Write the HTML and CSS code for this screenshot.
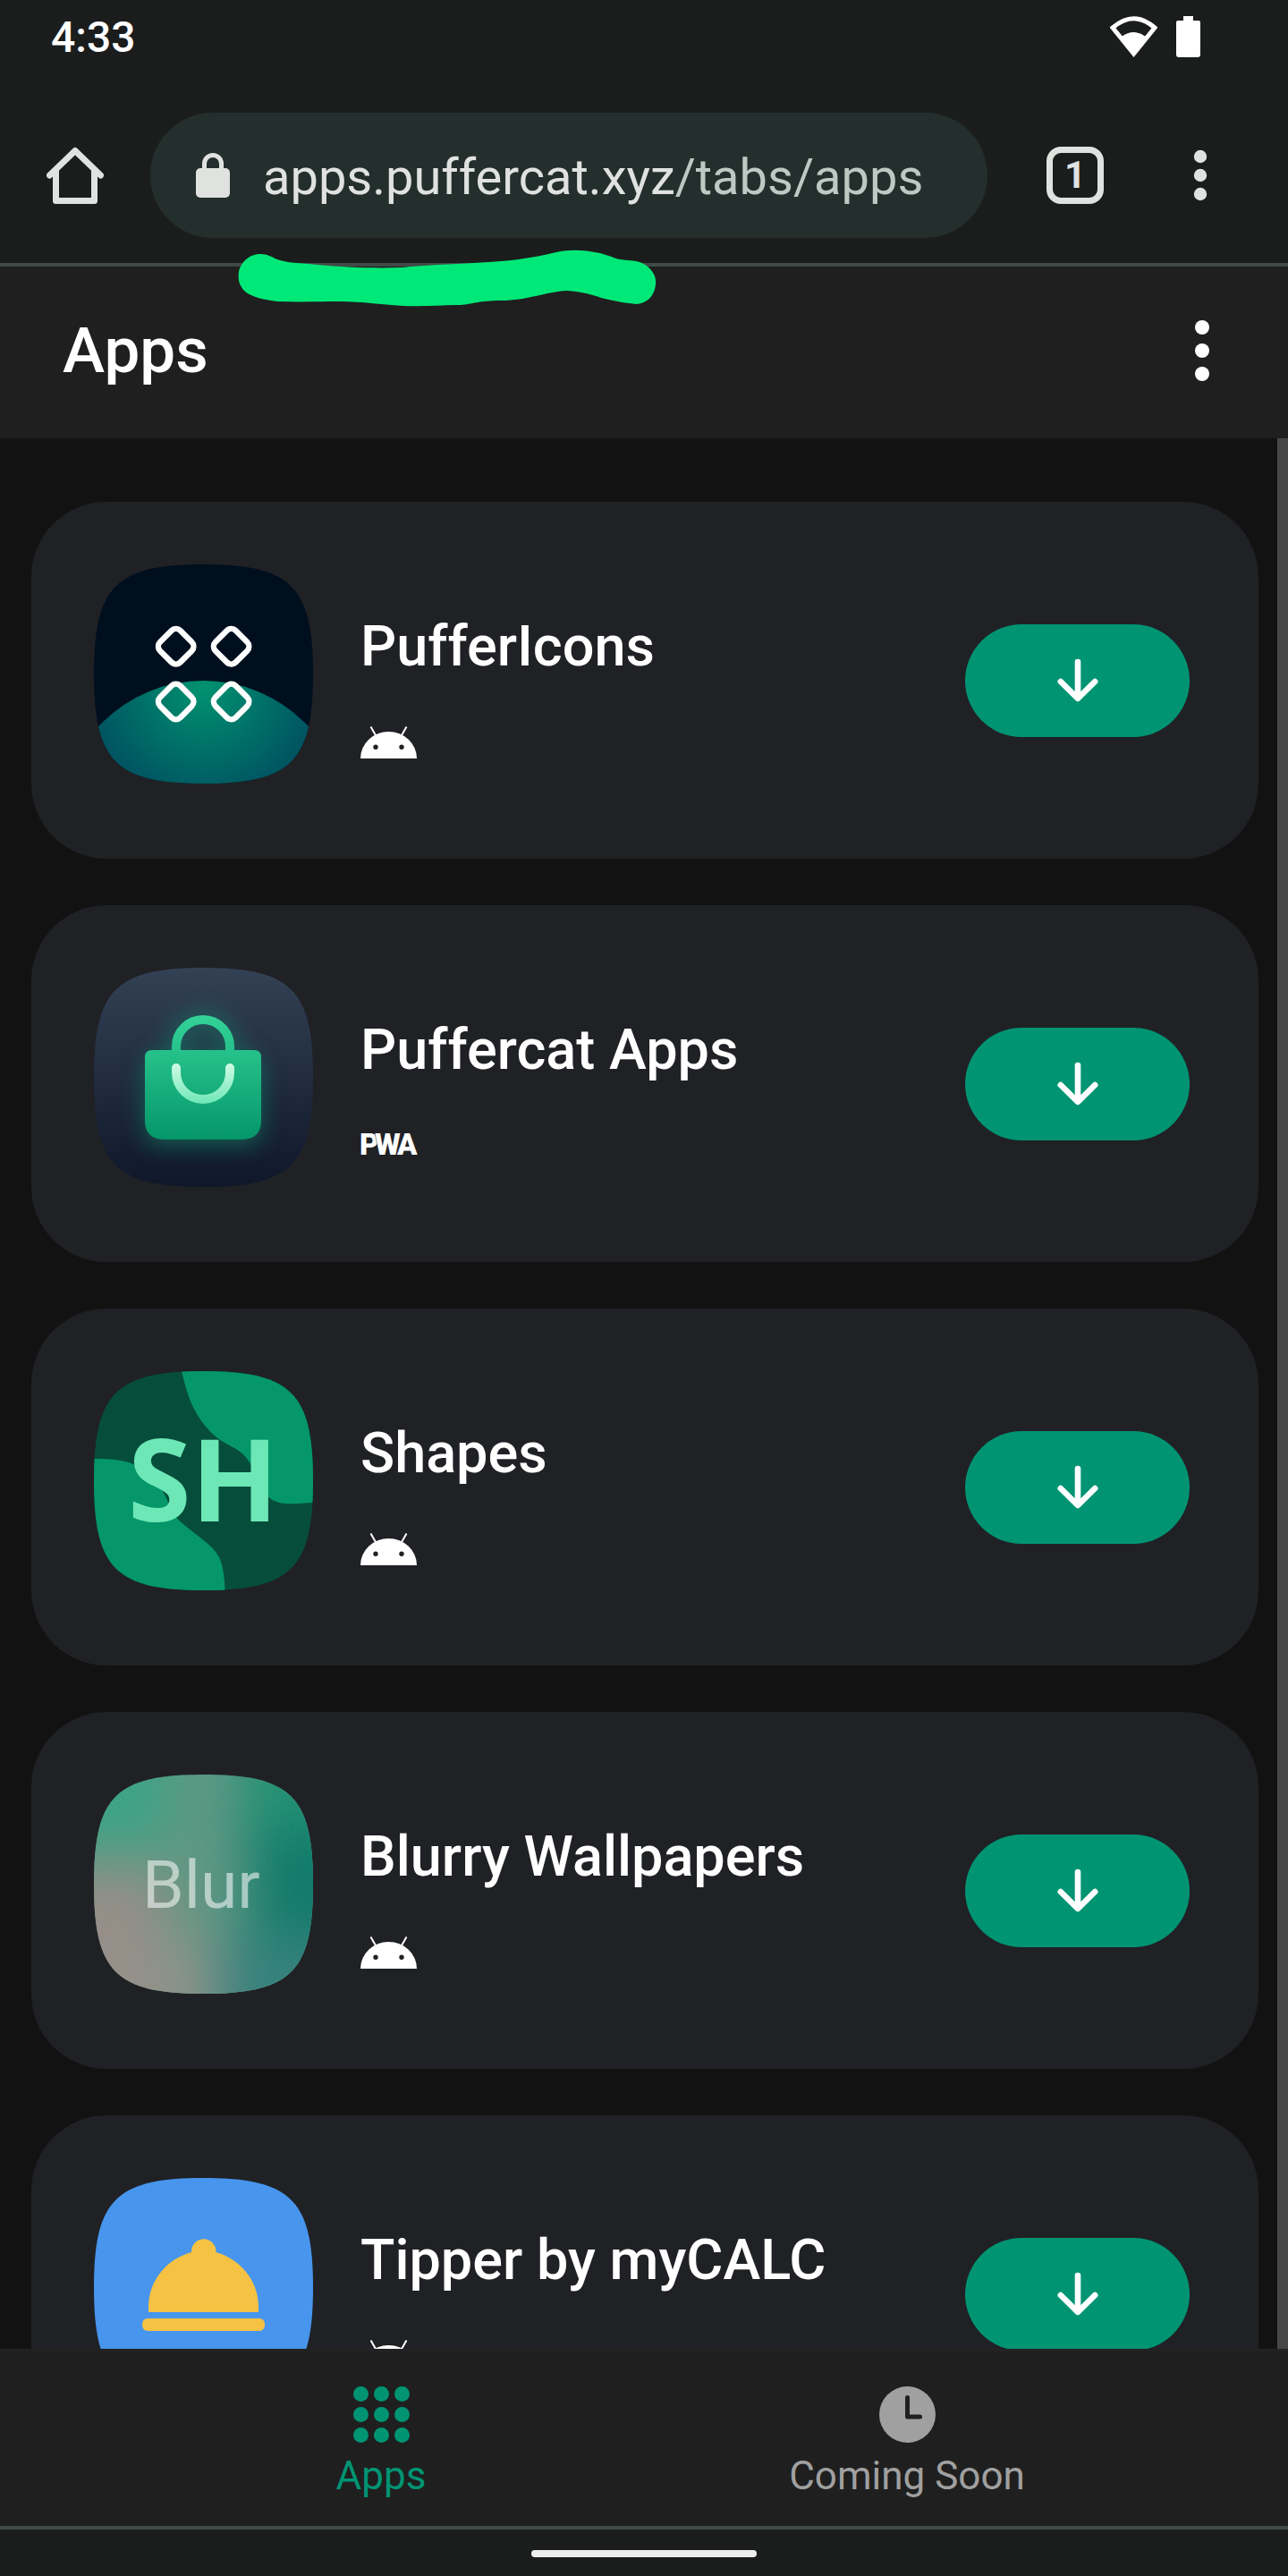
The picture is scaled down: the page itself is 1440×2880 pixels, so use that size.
FILE: index.html
```html
<!DOCTYPE html>
<html lang="en">
<head>
<meta charset="utf-8">
<meta name="viewport" content="width=device-width, initial-scale=1">
<title>Apps</title>
<link rel="stylesheet" href="styles.css">
</head>
<body>
<svg class="defs" aria-hidden="true">
  <defs>
    <clipPath id="squircle"><path d="M122.500 0C24.500 0 0 24.500 0 122.500S24.500 245 122.500 245 245 220.500 245 122.500 220.500 0 122.500 0Z"/></clipPath>
    <symbol id="android" viewBox="0 0 63 36">
      <path fill="#fff" fill-rule="evenodd" d="M0 36A31.500 30 0 0 1 63 36ZM14.300 23.300a2.700 2.700 0 1 0 5.400 0a2.700 2.700 0 1 0-5.400 0ZM43.300 23.300a2.700 2.700 0 1 0 5.400 0a2.700 2.700 0 1 0-5.400 0Z"/>
      <path stroke="#fff" stroke-width="2" d="M11.500 0.500L17.500 11M51.500 0.500L45.500 11"/>
    </symbol>
    <symbol id="arrow" viewBox="0 0 46 50">
      <path fill="none" stroke="#fff" stroke-width="6.600" stroke-linecap="round" stroke-linejoin="round" d="M23 4V44M3.800 26L23 45L42.200 26"/>
    </symbol>
    <radialGradient id="planet" gradientUnits="userSpaceOnUse" cx="122.500" cy="138" r="135">
      <stop offset="0" stop-color="#009270"/><stop offset="1" stop-color="#005060"/>
    </radialGradient>
    <linearGradient id="night" x1="0" y1="0" x2="0" y2="1">
      <stop offset="0" stop-color="#334155"/><stop offset="1" stop-color="#0f172a"/>
    </linearGradient>
    <linearGradient id="bag" gradientUnits="userSpaceOnUse" x1="0" y1="52" x2="0" y2="192">
      <stop offset="0" stop-color="#34d399"/><stop offset="1" stop-color="#059669"/>
    </linearGradient>
    <linearGradient id="smile" gradientUnits="userSpaceOnUse" x1="0" y1="107" x2="0" y2="152">
      <stop offset="0" stop-color="#d1fae5"/><stop offset="1" stop-color="#6ee7b7"/>
    </linearGradient>
    <filter id="glow" x="-50%" y="-50%" width="200%" height="200%"><feGaussianBlur stdDeviation="13"/></filter>
    <filter id="soft" x="-50%" y="-50%" width="200%" height="200%" color-interpolation-filters="sRGB"><feGaussianBlur stdDeviation="30"/></filter>
    <filter id="grain" x="0" y="0" width="100%" height="100%">
      <feTurbulence type="fractalNoise" baseFrequency="0.6" numOctaves="2" seed="3"/>
      <feColorMatrix type="saturate" values="0"/>
    </filter>
  </defs>
</svg>

<header class="browser">
  <div class="status">
    <span class="clock">4:33</span>
    <svg class="wifi" viewBox="0 0 53 46" aria-label="Wi-Fi">
      <path fill="none" stroke="#fff" stroke-width="5" d="M3 13Q26.500-7.500 50 13L26.500 42Z"/>
      <path fill="#fff" d="M13 23Q26.500 13 40 23L26.500 45Z"/>
    </svg>
    <svg class="battery" viewBox="0 0 27 46" aria-label="Battery">
      <path fill="#fff" d="M8 0H19V5H25Q27 5 27 7V43Q27 46 24 46H3Q0 46 0 43V7Q0 5 2 5H8Z"/>
    </svg>
  </div>
  <div class="toolbar">
    <button class="plain" aria-label="Home">
      <svg width="64" height="64" viewBox="0 0 64 64"><path fill="none" stroke="#e0e2e0" stroke-width="7" stroke-linecap="round" stroke-linejoin="round" d="M3.500 32L32 4.500L60.500 32"/><path fill="none" stroke="#e0e2e0" stroke-width="7" stroke-linejoin="round" d="M10.500 26V60.500H53.500V26"/></svg>
    </button>
    <button class="address">
      <svg width="38" height="50" viewBox="0 0 38 50" aria-hidden="true"><rect y="17" width="38" height="33" rx="5" fill="#e0e2e0"/><path fill="none" stroke="#e0e2e0" stroke-width="5" d="M9.500 18V12A9.500 9.500 0 0 1 28.500 12V18"/></svg>
      <span class="url">apps.puffercat.xyz<span class="path">/tabs/apps</span></span>
    </button>
    <button class="plain tabs-count" aria-label="Open tabs">1</button>
    <button class="plain browser-menu" aria-label="Browser menu">
      <svg width="16" height="58" viewBox="0 0 16 58" fill="#e0e2e0"><circle cx="8" cy="8" r="7.200"/><circle cx="8" cy="29" r="7.200"/><circle cx="8" cy="50" r="7.200"/></svg>
    </button>
  </div>
  <svg class="marker" viewBox="0 0 500 90" aria-hidden="true">
    <path fill="#00e978" d="M31 14C39 14 43 17 50 20C60 24 75 24 95 26C125 29 160 30 190 29C220 26 260 25 300 22C325 20 345 16 362 12C375 9 390 9 405 12C418 14 424 18 433 20C445 22 455 20 464 28C471 34 474 41 473 48C472 60 464 69 452 70C440 69 430 67 412 63C405 60 390 56 374 55C350 56 330 66 300 66C275 66 268 70 255 71C235 71 215 73 192 72C170 71 145 67 120 67C100 67 75 68 50 67C35 65 20 62 13 55C7 48 6 42 7 34C9 24 18 14 31 14Z"/>
  </svg>
</header>

<header class="app-bar">
  <h1>Apps</h1>
  <button class="plain" aria-label="More options">
    <svg width="16" height="68" viewBox="0 0 16 68" fill="#fff"><circle cx="8" cy="8" r="8"/><circle cx="8" cy="34" r="8"/><circle cx="8" cy="60" r="8"/></svg>
  </button>
</header>

<main class="content">
  <ul class="list">
    <li class="card">
      <svg class="icon" viewBox="0 0 245 245" aria-hidden="true">
        <g clip-path="url(#squircle)">
          <rect width="245" height="245" fill="#000f1e"/>
          <circle cx="122.500" cy="290" r="160" fill="url(#planet)"/>
        </g>
        <g fill="none" stroke="#fff" stroke-width="6.400">
          <rect x="75.700" y="75.700" width="32" height="32" rx="7" transform="rotate(45 91.700 91.700)"/>
          <rect x="137.600" y="75.700" width="32" height="32" rx="7" transform="rotate(45 153.600 91.700)"/>
          <rect x="75.700" y="137.500" width="32" height="32" rx="7" transform="rotate(45 91.700 153.500)"/>
          <rect x="137.600" y="137.500" width="32" height="32" rx="7" transform="rotate(45 153.600 153.500)"/>
        </g>
      </svg>
      <div class="info"><h2>PufferIcons</h2><svg class="platform" role="img" aria-label="Android"><use href="#android"/></svg></div>
      <button class="download" aria-label="Download PufferIcons"><svg width="46" height="50"><use href="#arrow"/></svg></button>
    </li>
    <li class="card">
      <svg class="icon" viewBox="0 0 245 245" aria-hidden="true">
        <g clip-path="url(#squircle)">
          <rect width="245" height="245" fill="url(#night)"/>
          <g filter="url(#glow)" opacity="0.400"><rect x="57" y="96" width="130" height="102" rx="16" fill="#10b981"/><path fill="none" stroke="#10b981" stroke-width="16" d="M92 95V88A30 30 0 0 1 152 88V95"/></g>
        </g>
        <path fill="none" stroke="url(#bag)" stroke-width="10" d="M92 94V88A30 30 0 0 1 152 88V94"/>
        <path fill="url(#bag)" d="M65 92H179Q187 92 187 100V170Q187 192 165 192H79Q57 192 57 170V100Q57 92 65 92Z"/>
        <path fill="none" stroke="url(#smile)" stroke-width="10" stroke-linecap="round" d="M92 112V117A30 30 0 0 0 152 117V112"/>
      </svg>
      <div class="info"><h2>Puffercat Apps</h2>
        <svg class="platform" viewBox="0 0 63 36" role="img" aria-label="PWA"><text class="pwa" y="28" x="-1 16 41">PWA</text></svg>
      </div>
      <button class="download" aria-label="Download Puffercat Apps"><svg width="46" height="50"><use href="#arrow"/></svg></button>
    </li>
    <li class="card">
      <svg class="icon" viewBox="0 0 245 245" aria-hidden="true">
        <g clip-path="url(#squircle)">
          <rect width="245" height="245" fill="#064e3b"/>
          <path fill="#059669" d="M98 0C104 24 110 50 136 73C150 85 168 86 177 108C186 130 192 147 215 148C225 149 235 147 245 147V0Z"/>
          <path fill="#059669" d="M0 98C20 98 33 99 44 104C62 112 72 123 80 140C86 152 88 162 100 171C116 185 132 193 140 208C145 219 146 232 146.500 245H0Z"/>
        </g>
        <text class="shapes-text" x="38" y="168">SH</text>
      </svg>
      <div class="info"><h2>Shapes</h2><svg class="platform" role="img" aria-label="Android"><use href="#android"/></svg></div>
      <button class="download" aria-label="Download Shapes"><svg width="46" height="50"><use href="#arrow"/></svg></button>
    </li>
    <li class="card">
      <svg class="icon" viewBox="0 0 245 245" aria-hidden="true">
        <g clip-path="url(#squircle)">
          <rect width="245" height="245" fill="#5c9782"/>
          <g filter="url(#soft)">
            <rect x="-60" y="-60" width="140" height="140" fill="#38a383"/>
            <rect x="-60" y="105" width="140" height="220" fill="#968d87"/>
            <rect x="60" y="180" width="80" height="130" fill="#8b9389"/>
            <rect x="165" y="-60" width="160" height="140" fill="#1d9072"/>
            <rect x="175" y="60" width="150" height="130" fill="#0b7867"/>
            <rect x="140" y="180" width="180" height="140" fill="#32807a"/>
          </g>
          <rect width="245" height="245" filter="url(#grain)" opacity="0.080"/>
        </g>
        <text class="blur-text" x="54" y="149">Blur</text>
      </svg>
      <div class="info"><h2>Blurry Wallpapers</h2><svg class="platform" role="img" aria-label="Android"><use href="#android"/></svg></div>
      <button class="download" aria-label="Download Blurry Wallpapers"><svg width="46" height="50"><use href="#arrow"/></svg></button>
    </li>
    <li class="card">
      <svg class="icon" viewBox="0 0 245 245" aria-hidden="true">
        <rect width="245" height="245" fill="#4795ed" clip-path="url(#squircle)"/>
        <path fill="#f5c244" d="M61 150V144C61 116 80 91 109 83V81A13.800 13.800 0 0 1 136.500 81V83C165 91 184 116 184 144V150Z"/>
        <rect x="54" y="157" width="137" height="14" rx="6" fill="#f5c244"/>
      </svg>
      <div class="info"><h2>Tipper by myCALC</h2><svg class="platform" role="img" aria-label="Android"><use href="#android"/></svg></div>
      <button class="download" aria-label="Download Tipper by myCALC"><svg width="46" height="50"><use href="#arrow"/></svg></button>
    </li>
  </ul>
  <div class="scrollbar"></div>
</main>

<nav class="tab-bar">
  <a class="tab active" href="#apps" aria-current="page">
    <svg width="63" height="63" viewBox="0 0 63 63" fill="currentColor" aria-hidden="true"><circle cx="8.500" cy="8.500" r="8.500"/><circle cx="31.500" cy="8.500" r="8.500"/><circle cx="54.500" cy="8.500" r="8.500"/><circle cx="8.500" cy="31.500" r="8.500"/><circle cx="31.500" cy="31.500" r="8.500"/><circle cx="54.500" cy="31.500" r="8.500"/><circle cx="8.500" cy="54.500" r="8.500"/><circle cx="31.500" cy="54.500" r="8.500"/><circle cx="54.500" cy="54.500" r="8.500"/></svg>
    <span>Apps</span>
  </a>
  <a class="tab" href="#soon">
    <svg width="63" height="63" viewBox="0 0 63 63" aria-hidden="true"><circle cx="31.500" cy="31.500" r="31.500" fill="currentColor"/><path fill="none" stroke="#1f1f1f" stroke-width="5" stroke-linecap="round" stroke-linejoin="round" d="M31.500 12.500V34H45.500"/></svg>
    <span>Coming Soon</span>
  </a>
</nav>
<footer class="gesture"><div class="handle"></div></footer>
</body>
</html>
```
FILE: styles.css
```css
* { box-sizing: border-box; }

body {
  margin: 0;
  height: 100vh;
  display: flex;
  flex-direction: column;
  background: #121212;
  color: #fff;
  font-family: Roboto, "Liberation Sans", sans-serif;
}

svg { display: block; flex: none; }
h1, h2 { margin: 0; font-weight: 500; }
button { border: 0; padding: 0; font: inherit; color: inherit; cursor: pointer; }
.plain { background: none; flex: none; }
.defs { position: absolute; width: 0; height: 0; }

/* Browser chrome */
.browser {
  position: relative;
  flex: none;
  background: #1b1d1c;
  border-bottom: 4px solid #404a46;
}
.status {
  display: flex;
  align-items: center;
  height: 84px;
  padding: 0 98px 2px 57px;
}
.clock { flex: 1; font-size: 48px; font-weight: 500; }
.wifi { width: 53px; height: 46px; margin-right: 21px; }
.battery { width: 27px; height: 46px; }

.toolbar {
  display: flex;
  align-items: center;
  height: 210px;
  padding: 14px 90px 0 52px;
}
.address {
  flex: 1;
  min-width: 0;
  height: 140px;
  margin: 0 66px 0 52px;
  padding: 0 51px;
  display: flex;
  align-items: center;
  gap: 37px;
  border-radius: 70px;
  background: #242f2d;
  color: #e0e2e0;
  font-size: 56px;
  white-space: nowrap;
}
.url { padding-top: 4px; }
.path { color: #bec9c3; }
.tabs-count {
  width: 64px;
  height: 64px;
  margin-right: 100px;
  border: 7px solid #e0e2e0;
  border-radius: 16px;
  color: #e0e2e0;
  font-size: 42px;
  font-weight: 700;
  line-height: 50px;
}
.marker {
  position: absolute;
  left: 260px;
  top: 270px;
  width: 500px;
  height: 90px;
  z-index: 2;
}

/* App header */
.app-bar {
  flex: none;
  height: 192px;
  padding: 0 88px 4px 70px;
  display: flex;
  align-items: center;
  justify-content: space-between;
  background: #1f1f1f;
}
.app-bar h1 { font-size: 71px; line-height: 84px; }

/* App list */
.content {
  flex: 1;
  min-height: 0;
  display: flex;
  overflow: hidden;
}
.list {
  flex: 1;
  min-width: 0;
  margin: 0;
  padding: 71px 21px 71px 35px;
  list-style: none;
  display: flex;
  flex-direction: column;
  gap: 52px;
}
.card {
  flex: none;
  display: flex;
  align-items: flex-start;
  padding: 70px 77px 84px 70px;
  border-radius: 84px;
  background: #202125;
}
.icon { width: 245px; height: 245px; }
.info { flex: 1; min-width: 0; padding: 52px 0 0 53px; }
.info h2 { font-size: 63px; line-height: 80px; }
.platform { width: 63px; height: 36px; margin-top: 49px; overflow: visible; }
.download {
  flex: none;
  width: 251px;
  height: 126px;
  margin-top: 67px;
  display: flex;
  align-items: center;
  justify-content: center;
  border-radius: 63px;
  background: #009473;
}
.scrollbar { flex: none; width: 12px; background: #474747; }

.pwa {
  font: 900 33px Roboto, sans-serif;
  fill: #fff;
  stroke: #202125;
  stroke-width: 1px;
  paint-order: stroke;
}
.shapes-text { font: 700 128px "Open Sans", sans-serif; fill: #6ee7b7; }
.blur-text { font: 400 75px Roboto, sans-serif; fill: #fff; fill-opacity: 0.55; }

/* Bottom navigation */
.tab-bar {
  flex: none;
  display: flex;
  justify-content: center;
  height: 198px;
  border-top: 3px solid #222;
  background: #1f1f1f;
}
.tab {
  flex: 0 1 588px;
  padding-top: 39px;
  display: flex;
  flex-direction: column;
  align-items: center;
  gap: 12px;
  color: #a0a0a0;
  font-size: 44px;
  line-height: 50px;
  text-decoration: none;
}
.tab.active { color: #009473; }

.gesture {
  flex: none;
  height: 56px;
  padding-top: 23px;
  border-top: 4px solid #404a46;
  background: #1b1d1c;
}
.handle { width: 252px; height: 8px; margin: 0 auto; border-radius: 4px; background: #eee; }
```
